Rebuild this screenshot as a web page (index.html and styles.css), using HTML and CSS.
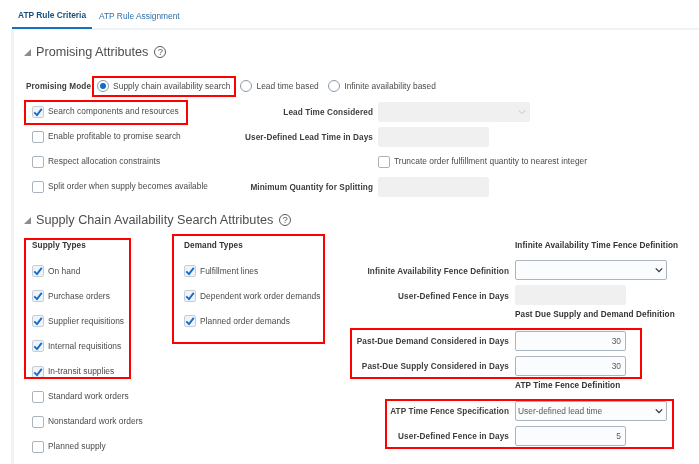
FILE: index.html
```html
<!DOCTYPE html>
<html lang="en">
<head>
<meta charset="utf-8">
<title>ATP Rule</title>
<link rel="stylesheet" href="styles.css">
</head>
<body>
<nav class="tabs">
  <a class="tab active">ATP Rule Criteria</a>
  <a class="tab">ATP Rule Assignment</a>
</nav>
<main class="panel">
  <h2 class="heading heading-first"><span class="tri"></span>Promising Attributes<span class="help">?</span></h2>
  <div class="mode-row">
    <span class="label mode-label">Promising Mode</span>
    <span class="radio on"></span><span class="txt">Supply chain availability search</span>
    <span class="radio r2"></span><span class="txt">Lead time based</span>
    <span class="radio r3"></span><span class="txt">Infinite availability based</span>
  </div>
  <div class="attrs">
    <div class="chk-row"><span class="box on"><svg viewBox="0 0 12 12"><path d="M1.5 6.5 4.8 9.8 10.5 2.2"/></svg></span><span class="txt">Search components and resources</span></div>
    <span class="label">Lead Time Considered</span>
    <div class="ctl select disabled w-l"><svg viewBox="0 0 10 6" class="chev light"><path d="M1 1l4 4 4-4"/></svg></div>

    <div class="chk-row"><span class="box"></span><span class="txt">Enable profitable to promise search</span></div>
    <span class="label">User-Defined Lead Time in Days</span>
    <div class="ctl disabled w-m"></div>

    <div class="chk-row"><span class="box"></span><span class="txt">Respect allocation constraints</span></div>
    <span></span>
    <div class="chk-row flush"><span class="box"></span><span class="txt">Truncate order fulfillment quantity to nearest integer</span></div>

    <div class="chk-row"><span class="box"></span><span class="txt">Split order when supply becomes available</span></div>
    <span class="label">Minimum Quantity for Splitting</span>
    <div class="ctl disabled w-m"></div>
  </div>
  <h2 class="heading heading-second"><span class="tri"></span>Supply Chain Availability Search Attributes<span class="help">?</span></h2>
  <div class="columns">
    <section class="col col-supply">
      <h3 class="sub">Supply Types</h3>
      <div class="chk-row"><span class="box on"><svg viewBox="0 0 12 12"><path d="M1.5 6.5 4.8 9.8 10.5 2.2"/></svg></span><span class="txt">On hand</span></div>
      <div class="chk-row"><span class="box on"><svg viewBox="0 0 12 12"><path d="M1.5 6.5 4.8 9.8 10.5 2.2"/></svg></span><span class="txt">Purchase orders</span></div>
      <div class="chk-row"><span class="box on"><svg viewBox="0 0 12 12"><path d="M1.5 6.5 4.8 9.8 10.5 2.2"/></svg></span><span class="txt">Supplier requisitions</span></div>
      <div class="chk-row"><span class="box on"><svg viewBox="0 0 12 12"><path d="M1.5 6.5 4.8 9.8 10.5 2.2"/></svg></span><span class="txt">Internal requisitions</span></div>
      <div class="chk-row"><span class="box on"><svg viewBox="0 0 12 12"><path d="M1.5 6.5 4.8 9.8 10.5 2.2"/></svg></span><span class="txt">In-transit supplies</span></div>
      <div class="chk-row"><span class="box"></span><span class="txt">Standard work orders</span></div>
      <div class="chk-row"><span class="box"></span><span class="txt">Nonstandard work orders</span></div>
      <div class="chk-row"><span class="box"></span><span class="txt">Planned supply</span></div>
    </section>
    <section class="col col-demand">
      <h3 class="sub">Demand Types</h3>
      <div class="chk-row"><span class="box on"><svg viewBox="0 0 12 12"><path d="M1.5 6.5 4.8 9.8 10.5 2.2"/></svg></span><span class="txt">Fulfillment lines</span></div>
      <div class="chk-row"><span class="box on"><svg viewBox="0 0 12 12"><path d="M1.5 6.5 4.8 9.8 10.5 2.2"/></svg></span><span class="txt">Dependent work order demands</span></div>
      <div class="chk-row"><span class="box on"><svg viewBox="0 0 12 12"><path d="M1.5 6.5 4.8 9.8 10.5 2.2"/></svg></span><span class="txt">Planned order demands</span></div>
    </section>
    <section class="col-fence">
      <h3 class="sub fence-head first">Infinite Availability Time Fence Definition</h3>
      <span class="label lower">Infinite Availability Fence Definition</span>
      <div class="ctl select w-l2"><svg viewBox="0 0 10 6" class="chev"><path d="M1 1l4 4 4-4"/></svg></div>
      <span class="label lower">User-Defined Fence in Days</span>
      <div class="ctl disabled w-m"></div>
      <h3 class="sub fence-head second">Past Due Supply and Demand Definition</h3>
      <span class="label">Past-Due Demand Considered in Days</span>
      <div class="ctl num w-m">30</div>
      <span class="label">Past-Due Supply Considered in Days</span>
      <div class="ctl num w-m">30</div>
      <h3 class="sub fence-head">ATP Time Fence Definition</h3>
      <span class="label">ATP Time Fence Specification</span>
      <div class="ctl select w-l2"><span class="val">User-defined lead time</span><svg viewBox="0 0 10 6" class="chev"><path d="M1 1l4 4 4-4"/></svg></div>
      <span class="label">User-Defined Fence in Days</span>
      <div class="ctl num w-m">5</div>
    </section>
  </div>
</main>
<div class="mark m1"></div>
<div class="mark m2"></div>
<div class="mark m3"></div>
<div class="mark m4"></div>
<div class="mark m5"></div>
<div class="mark m6"></div>
</body>
</html>
```
FILE: styles.css
```css
* { box-sizing: border-box; }
html, body { margin: 0; padding: 0; }
body {
  position: relative;
  width: 699px;
  height: 464px;
  overflow: hidden;
  background: #fff;
  font-family: "Liberation Sans", Arial, sans-serif;
  font-size: 8.4px;
  color: #4a4a48;
  filter: blur(0.4px);
}
.tabs {
  display: flex;
  height: 28px;
  margin-left: 12px;
}
.tab {
  display: flex;
  align-items: center;
  height: 29px;
  padding: 3px 6px 0;
  margin-right: 1px;
  color: #2f6fa8;
  font-size: 8.4px;
  white-space: nowrap;
}
.active {
  color: #17507f;
  font-weight: bold;
  border-bottom: 2px solid #1a70c0;
  position: relative;
  z-index: 1;
  width: 80px;
}
.panel {
  margin-left: 11px;
  height: 436px;
  border-left: 3px solid #eef3f8;
  border-top: 2px solid #eef3f8;
  padding-left: 8px;
}
.heading {
  display: flex;
  align-items: center;
  margin: 0;
  height: 20px;
  padding-top: 2px;
  font-weight: normal;
  font-size: 12.65px;
  color: #4d4d4b;
}
.heading-first { margin-top: 11px; }
.heading-second { margin-top: 11px; }
.tri {
  width: 0;
  height: 0;
  margin: 1px 5px 0 2px;
  border-style: solid;
  border-width: 0 0 7px 7px;
  border-color: transparent transparent #8c8c8c transparent;
}
.help {
  width: 12px;
  height: 12px;
  margin-left: 6px;
  border: 1px solid #5a5a5a;
  border-radius: 50%;
  font-size: 9.5px;
  line-height: 10px;
  text-align: center;
  color: #5a5a5a;
}
.mode-row {
  display: flex;
  align-items: center;
  height: 25px;
  margin-top: 12px;
  padding-left: 4px;
}
.mode-label { margin-right: 6px; }
.label {
  padding-top: 2px;
  font-size: 8.2px;
  font-weight: bold;
  color: #3d3d3b;
  text-align: right;
  white-space: nowrap;
  letter-spacing: 0.1px;
}
.radio {
  flex: none;
  width: 12px;
  height: 12px;
  margin: 1px 4px 0 0;
  border: 1px solid #8d9aa6;
  border-radius: 50%;
  background: #fff;
  position: relative;
}
.radio.on::after {
  content: "";
  position: absolute;
  left: 2px;
  top: 2px;
  width: 6px;
  height: 6px;
  border-radius: 50%;
  background: #0f6cc9;
}
.r2 { margin-left: 10px; }
.r3 { margin-left: 9.5px; }
.txt { white-space: nowrap; letter-spacing: 0.03px; }
.attrs {
  display: grid;
  grid-template-columns: 181px 175px 1fr;
  grid-auto-rows: 25px;
  align-items: center;
}
.attrs > .label { padding: 4px 5px 0 0; }
.attrs .box { margin-top: 3px; }
.attrs > .ctl { margin-top: 2px; }
.chk-row {
  display: flex;
  align-items: center;
  height: 25.12px;
  padding-left: 10px;
}
.attrs > .flush { padding-left: 0; }
.box {
  flex: none;
  display: block;
  width: 12px;
  height: 12px;
  margin: 1px 4px 0 0;
  border: 1px solid #a9b4bf;
  border-radius: 2px;
  background: #fff;
}
.box.on { background: #f0f4f8; border-color: #c5ced7; }
.box svg { display: block; width: 10px; height: 10px; }
.box path { fill: none; stroke: #0f6cc9; stroke-width: 2.2; }
.ctl {
  display: flex;
  align-items: center;
  height: 20px;
  border: 1px solid #a9b6c1;
  border-radius: 2px;
  background: #fbfcfd;
  color: #5a5a58;
}
.disabled { background: #f0f0f1; border-color: #f0f0f1; }
.w-l { width: 152px; }
.w-l2 { width: 152px; }
.w-m { width: 111px; }
.num { justify-content: flex-end; padding-right: 4px; }
.select { justify-content: flex-end; padding: 0 3px 0 2px; }
.val { margin-right: auto; }
.chev { width: 8px; height: 6px; }
.chev path { fill: none; stroke: #333; stroke-width: 1.6; }
.chev.light path { stroke: #bdbdbd; stroke-width: 1.1; }
.columns {
  display: grid;
  grid-template-columns: 151px 165px 1fr;
  margin-top: 4px;
}
.col { display: flex; flex-direction: column; }
.sub {
  display: flex;
  align-items: center;
  height: 25.12px;
  margin: 0;
  padding-left: 10px;
  font-size: 8.2px;
  font-weight: bold;
  color: #333331;
  white-space: nowrap;
  letter-spacing: 0.1px;
}
.col-demand .chk-row { padding-left: 11px; }
.col-demand .sub { padding-left: 11px; }
.col-fence {
  display: grid;
  grid-template-columns: 177px 1fr;
  align-items: center;
  grid-auto-rows: min-content;
}
.col-fence > .label { padding-right: 6px; }
.col-fence > .label.lower { padding-top: 4px; }
.col-fence > .ctl { margin: 2.5px 0; }
.fence-head { grid-column: 1 / -1; padding-left: 177px; padding-bottom: 5px; height: 20px; }
.fence-head.first { height: 24px; padding-bottom: 0; }
.fence-head.second { height: 21px; padding-bottom: 6px; }
.mark {
  position: absolute;
  border: 2px solid #f00;
}
.m1 { left: 92px; top: 76px; width: 144px; height: 21px; }
.m2 { left: 24px; top: 100px; width: 164px; height: 25px; }
.m3 { left: 24px; top: 238px; width: 107px; height: 141px; }
.m4 { left: 172px; top: 234px; width: 153px; height: 110px; }
.m5 { left: 350px; top: 328px; width: 292px; height: 51px; }
.m6 { left: 385px; top: 399px; width: 289px; height: 50px; }
```
